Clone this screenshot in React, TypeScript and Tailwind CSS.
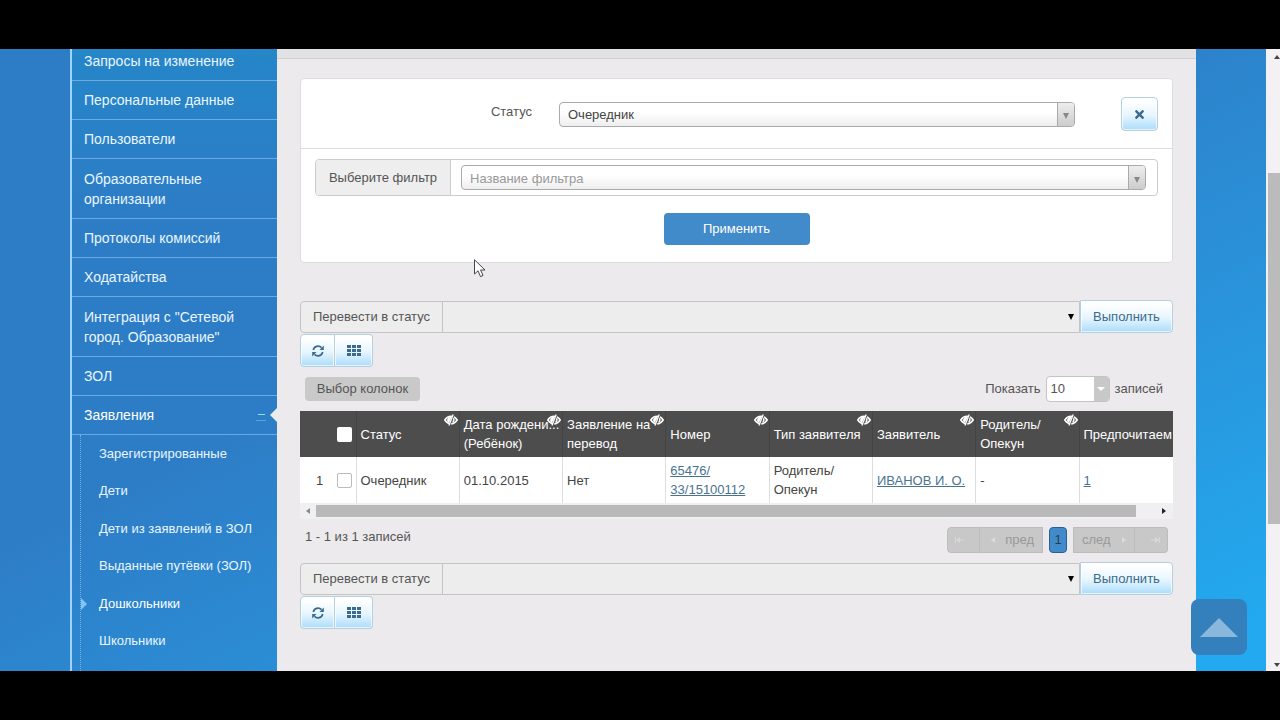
import React from 'react';
import { FaTimes } from 'react-icons/fa';

interface MenuItem {
  label: string;
  lines?: string[];
  active?: boolean;
}

interface Column {
  id: string;
  lines: string[];
  hideable: boolean;
}

const MENU: MenuItem[] = [
  { label: 'Персональные данные' },
  { label: 'Пользователи' },
  { label: 'Образовательные организации', lines: ['Образовательные', 'организации'] },
  { label: 'Протоколы комиссий' },
  { label: 'Ходатайства' },
  { label: 'Интеграция', lines: ['Интеграция с "Сетевой', 'город. Образование"'] },
  { label: 'ЗОЛ' },
];

const SUBMENU: MenuItem[] = [
  { label: 'Зарегистрированные' },
  { label: 'Дети' },
  { label: 'Дети из заявлений в ЗОЛ' },
  { label: 'Выданные путёвки (ЗОЛ)' },
  { label: 'Дошкольники', active: true },
  { label: 'Школьники' },
];

const COLUMNS: Column[] = [
  { id: 'status', lines: ['Статус'], hideable: true },
  { id: 'birth', lines: ['Дата рождени...', '(Ребёнок)'], hideable: true },
  { id: 'transfer', lines: ['Заявление на', 'перевод'], hideable: true },
  { id: 'number', lines: ['Номер'], hideable: true },
  { id: 'type', lines: ['Тип заявителя'], hideable: true },
  { id: 'applicant', lines: ['Заявитель'], hideable: true },
  { id: 'guardian', lines: ['Родитель/', 'Опекун'], hideable: true },
  { id: 'preferred', lines: ['Предпочитаем'], hideable: false },
];

const glossy =
  'border border-[#b4cfe2] bg-linear-to-b from-white from-10% via-[#e6f5fe] via-55% to-[#aadcfa] text-[#3a6b8c] shadow-[inset_0_0_0_1px_#ffffffb0]';

const EyeOff: React.FC = () => (
  <svg viewBox="0 0 14 12" className="h-[12px] w-[14px]" aria-hidden="true">
    <path
      d="M0.800 6C2.500 3.300 4.600 2.200 7 2.200S11.500 3.300 13.200 6C11.500 8.700 9.400 9.800 7 9.800S2.500 8.700 0.800 6Z"
      fill="#6a6a6a"
      stroke="#fff"
      strokeWidth="1.500"
    />
    <path d="M7.500 3.200A3 3 0 0 0 5 8.800Z" fill="#fff" />
    <path d="M9.400 4.200C10.200 5.500 10 7 8.700 8.300" fill="none" stroke="#fff" strokeWidth="1.300" />
    <path d="M10 0.600L5.800 11.600" stroke="#4d4d4d" strokeWidth="1.300" />
    <path d="M9.200 0.500L5 11.500" stroke="#fff" strokeWidth="1.300" />
  </svg>
);

const RefreshIcon: React.FC = () => (
  <svg viewBox="0 0 12 12" className="h-[12px] w-[12px]" aria-hidden="true">
    <path d="M1.300 5A4.800 4.800 0 0 1 9.500 2.700" fill="none" stroke="currentColor" strokeWidth="1.700" />
    <path d="M11.800 0.600V4.900H7.500Z" fill="currentColor" />
    <path d="M10.700 7A4.800 4.800 0 0 1 2.500 9.300" fill="none" stroke="currentColor" strokeWidth="1.700" />
    <path d="M0.200 11.400V7.100H4.500Z" fill="currentColor" />
  </svg>
);

const GridIcon: React.FC = () => (
  <svg viewBox="0 0 14 11" className="h-[11px] w-[14px]" aria-hidden="true">
    <path
      d="M0 0H4V3H0ZM5 0H9V3H5ZM10 0H14V3H10ZM0 4H4V7H0ZM5 4H9V7H5ZM10 4H14V7H10ZM0 8H4V11H0ZM5 8H9V11H5ZM10 8H14V11H10Z"
      fill="currentColor"
    />
  </svg>
);

interface FilterSelectProps {
  id: string;
  value: string;
  muted?: boolean;
}

const FilterSelect: React.FC<FilterSelectProps> = ({ id, value, muted }) => (
  <div className="flex h-[25px] min-w-0 flex-1 overflow-hidden rounded border border-[#aaa] bg-linear-to-b from-white from-40% to-[#eee]">
    <select
      id={id}
      className={`min-w-0 flex-1 appearance-none bg-transparent pt-[2px] pl-2 outline-none ${muted ? 'text-[#999]' : 'text-[#444]'}`}
    >
      <option>{value}</option>
    </select>
    <span className="flex w-[17px] items-center justify-center border-l border-[#aaa] bg-linear-to-b from-[#eee] to-[#ccc] pt-1">
      <svg viewBox="0 0 6 6" className="h-[6px] w-[6px]" aria-hidden="true">
        <path d="M0 0H6L3 6Z" fill="#888" />
      </svg>
    </span>
  </div>
);

const StatusBar: React.FC<{ id: string }> = ({ id }) => (
  <div>
    <div className="flex h-[33px] items-center">
      <div className="flex h-[32px] min-w-0 flex-1 rounded-l border border-[#c4c4c6] bg-[#ededee]">
        <label
          htmlFor={id}
          className="flex w-[142px] items-center justify-center whitespace-nowrap border-r border-[#c4c4c6] text-[#555]"
        >
          Перевести в статус
        </label>
        <select id={id} className="min-w-0 flex-1 appearance-none bg-transparent outline-none">
          <option></option>
        </select>
        <span className="flex w-[16px] items-center justify-center">
          <svg viewBox="0 0 6 6" className="h-[6px] w-[6px]" aria-hidden="true">
            <path d="M0 0H6L3 6Z" fill="#000" />
          </svg>
        </span>
      </div>
      <button type="button" className={`h-[33px] w-[93px] rounded-r ${glossy}`}>
        Выполнить
      </button>
    </div>
    <div className="mt-px flex">
      <button
        type="button"
        aria-label="Обновить"
        className={`flex h-[33px] w-[35px] items-center justify-center rounded-l ${glossy}`}
      >
        <RefreshIcon />
      </button>
      <button
        type="button"
        aria-label="Таблица"
        className={`flex h-[33px] w-[38px] items-center justify-center rounded-r border-l-0 ${glossy}`}
      >
        <GridIcon />
      </button>
    </div>
  </div>
);

const Sidebar: React.FC = () => (
  <nav className="flex w-[207px] shrink-0 flex-col border-l-2 border-[#9fd3f8] bg-linear-to-b from-[#1f8cc9]/60 to-transparent to-25% text-[14px] leading-[20px] text-[#eaf6ff]">
    <a href="#requests" className="border-b border-[#69abe0] pt-[2px] pb-[9px] pl-3">
      Запросы на изменение
    </a>
    {MENU.map((item) => (
      <a
        key={item.label}
        href="#section"
        className={`border-b border-[#69abe0] pl-3 ${item.lines ? 'pt-[10px] pb-[9px]' : 'py-[9px]'}`}
      >
        {(item.lines || [item.label]).map((line) => (
          <span key={line} className="block whitespace-nowrap">
            {line}
          </span>
        ))}
      </a>
    ))}
    <a href="#applications" className="flex items-center border-b border-[#69abe0] py-[9px] pl-3 text-white">
      <span className="flex-1">Заявления</span>
      <span className="mr-1 flex h-[12px] w-[10px] items-center justify-center border-b border-[#5a9fd8]">
        <span className="h-px w-[7px] bg-[#8fe0e8]"></span>
      </span>
      <svg viewBox="0 0 7 14" className="h-[14px] w-[7px]" aria-hidden="true">
        <path d="M7 0L0 7L7 14Z" fill="#eceaed" />
      </svg>
    </a>
    <ul className="ml-2 grid flex-1 auto-rows-fr border-l border-dotted border-[#6fb0e4] pb-[11px]">
      {SUBMENU.map((item) => (
        <li key={item.label} className="flex items-center">
          <span className="w-[18px]">
            {item.active && (
              <svg viewBox="0 0 6 12" className="h-[12px] w-[6px]" aria-hidden="true">
                <path d="M0 0L6 6L0 12Z" fill="#7fc4f5" />
              </svg>
            )}
          </span>
          <a href="#sub" className={`whitespace-nowrap text-[13px] ${item.active ? 'text-white' : ''}`}>
            {item.label}
          </a>
        </li>
      ))}
    </ul>
  </nav>
);

const FilterCard: React.FC = () => (
  <form className="rounded-sm border border-[#dddde0] bg-white">
    <div className="flex items-center border-b border-[#ddd] pt-[18px] pr-[14px] pb-[17px]">
      <label htmlFor="status" className="w-[231px] shrink-0 pb-1 text-right text-[#555]">
        Статус
      </label>
      <div className="mr-[46px] ml-[27px] flex min-w-0 flex-1">
        <FilterSelect id="status" value="Очередник" />
      </div>
      <button
        type="button"
        aria-label="Удалить фильтр"
        className={`flex h-[34px] w-[37px] items-center justify-center rounded ${glossy}`}
      >
        <FaTimes className="h-[13px] w-[13px]" />
      </button>
    </div>
    <div className="px-[14px] pt-[10px] pb-[17px]">
      <div className="flex h-[37px] items-stretch overflow-hidden rounded-sm border border-[#ccc]">
        <label
          htmlFor="filter"
          className="flex w-[135px] items-center justify-center whitespace-nowrap border-r border-[#ccc] bg-[#eee] text-[#555]"
        >
          Выберите фильтр
        </label>
        <div className="flex min-w-0 flex-1 items-center pr-[11px] pl-[10px]">
          <FilterSelect id="filter" value="Название фильтра" muted />
        </div>
      </div>
      <div className="mt-[17px] flex justify-center">
        <button type="button" className="h-[32px] w-[146px] rounded bg-[#428bca] text-white">
          Применить
        </button>
      </div>
    </div>
  </form>
);

const cell = 'border-r border-[#ddd] px-1 py-0 last:border-r-0';

const RecordsTable: React.FC = () => (
  <div className="overflow-hidden">
    <table className="w-[986px] table-fixed border-collapse text-left leading-[19px]">
      <colgroup>
        <col className="w-[56px]" />
        <col />
        <col />
        <col />
        <col />
        <col />
        <col />
        <col />
        <col className="w-[207px]" />
      </colgroup>
      <thead className="bg-[#4d4d4d] text-white">
        <tr className="h-[46px]">
          <th className="border-r border-[#444] p-0 pl-[37px] align-middle">
            <input
              type="checkbox"
              aria-label="Выбрать все"
              className="block h-[15px] w-[15px] appearance-none rounded-[2px] bg-white"
            />
          </th>
          {COLUMNS.map((col) => (
            <th key={col.id} className="relative border-r border-[#444] px-1 py-0 font-normal last:border-r-0">
              {col.lines.map((line) => (
                <span key={line} className="block whitespace-nowrap">
                  {line}
                </span>
              ))}
              {col.hideable && (
                <span className="absolute top-[3px] right-px">
                  <EyeOff />
                </span>
              )}
            </th>
          ))}
        </tr>
      </thead>
      <tbody className="bg-white text-[#444]">
        <tr className="h-[46px]">
          <td className="border-r border-[#ddd] p-0">
            <div className="flex items-center">
              <span className="w-[37px] pl-4">1</span>
              <input
                type="checkbox"
                aria-label="Выбрать запись 1"
                className="h-[15px] w-[15px] appearance-none rounded-[2px] border border-[#bbb] bg-white"
              />
            </div>
          </td>
          <td className={cell}>Очередник</td>
          <td className={cell}>01.10.2015</td>
          <td className={cell}>Нет</td>
          <td className={cell}>
            <a href="#record" className="text-[#4a7391] underline">
              65476/
              <br />
              33/15100112
            </a>
          </td>
          <td className={cell}>
            Родитель/
            <br />
            Опекун
          </td>
          <td className={cell}>
            <a href="#applicant" className="whitespace-nowrap text-[#4a7391] underline">
              ИВАНОВ И. О.
            </a>
          </td>
          <td className={cell}>-</td>
          <td className={cell}>
            <a href="#preferred" className="text-[#4a7391] underline">
              1
            </a>
          </td>
        </tr>
      </tbody>
    </table>
    <div className="flex h-[16px] items-center bg-[#f0eff1]">
      <span className="flex w-[16px] justify-center">
        <svg viewBox="0 0 4 6" className="h-[6px] w-[4px]" aria-hidden="true">
          <path d="M4 0L0 3L4 6Z" fill="#8a8a8a" />
        </svg>
      </span>
      <span className="h-[12px] flex-1 bg-[#b9b9b9]"></span>
      <span className="flex w-[37px] justify-end pr-[7px]">
        <svg viewBox="0 0 4 6" className="h-[6px] w-[4px]" aria-hidden="true">
          <path d="M0 0L4 3L0 6Z" fill="#222" />
        </svg>
      </span>
    </div>
  </div>
);

const Pager: React.FC = () => (
  <div className="flex h-[26px] items-stretch text-[#999]">
    <button
      type="button"
      aria-label="Первая"
      className="flex w-[33px] items-center justify-center rounded-l border border-[#bdbdbd] bg-[#c8c8c8] pr-2"
    >
      <svg viewBox="0 0 9 6" className="h-[6px] w-[9px]" aria-hidden="true">
        <path d="M0 0H1V6H0ZM5 0V6L1 3ZM5 2.500H9V3.500H5Z" fill="#d8d8d8" />
      </svg>
    </button>
    <button
      type="button"
      className="flex w-[63px] items-center justify-end gap-[10px] border-y border-r border-[#bdbdbd] bg-[#c8c8c8] pr-2"
    >
      <svg viewBox="0 0 4 6" className="h-[6px] w-[4px]" aria-hidden="true">
        <path d="M4 0V6L0 3Z" fill="#dcdcdc" />
      </svg>
      пред
    </button>
    <button
      type="button"
      className="mx-[6px] w-[18px] rounded border border-[#2c5f8f] bg-[#428bca] text-[#22405c]"
    >
      1
    </button>
    <button
      type="button"
      className="flex w-[62px] items-center gap-[11px] border border-[#bdbdbd] bg-[#c8c8c8] pl-2"
    >
      след
      <svg viewBox="0 0 4 6" className="h-[6px] w-[4px]" aria-hidden="true">
        <path d="M0 0V6L4 3Z" fill="#dcdcdc" />
      </svg>
    </button>
    <button
      type="button"
      aria-label="Последняя"
      className="flex w-[33px] items-center justify-center rounded-r border-y border-r border-[#bdbdbd] bg-[#c8c8c8] pl-2"
    >
      <svg viewBox="0 0 9 6" className="h-[6px] w-[9px]" aria-hidden="true">
        <path d="M8 0H9V6H8ZM4 0V6L8 3ZM0 2.500H4V3.500H0Z" fill="#d8d8d8" />
      </svg>
    </button>
  </div>
);

const App: React.FC = () => {
  return (
    <div className="relative flex min-h-screen flex-col bg-black py-[49px] font-['Liberation_Sans',Arial,sans-serif] text-[13px] leading-[20px]">
      <div className="flex flex-1 bg-linear-to-br from-[#2d7dc6] from-40% to-[#22a9ef] to-95%">
        <div className="w-[70px] shrink-0"></div>
        <Sidebar />
        <main className="min-w-0 flex-1 bg-[#eceaed]">
          <div className="h-[10px] border-b border-[#d0cfd2] bg-[#e2e1e4]"></div>
          <div className="px-[23px] pt-[19px]">
            <FilterCard />
            <div className="pt-[37px]">
              <StatusBar id="bulk-top" />
            </div>
            <div className="flex items-center justify-between px-[5px] pt-[9px] pb-[9px]">
              <button type="button" className="h-[24px] w-[115px] rounded bg-[#c9c9c9] text-[#555]">
                Выбор колонок
              </button>
              <div className="flex items-center gap-[5px] pr-[5px] text-[#555]">
                <label htmlFor="page-size">Показать</label>
                <div className="flex h-[26px] w-[64px] overflow-hidden rounded border border-[#c4c4c4] bg-white">
                  <select id="page-size" className="min-w-0 flex-1 appearance-none bg-transparent pl-1 outline-none">
                    <option>10</option>
                  </select>
                  <span className="flex w-[15px] items-center justify-center bg-[#c8c8c8]">
                    <svg viewBox="0 0 8 4" className="h-[4px] w-[8px]" aria-hidden="true">
                      <path d="M0 0H8L4 4Z" fill="#fff" />
                    </svg>
                  </span>
                </div>
                <span>записей</span>
              </div>
            </div>
            <RecordsTable />
            <div className="flex items-start justify-between px-[5px] pt-[8px] pb-[9px]">
              <p className="text-[#555]">1 - 1 из 1 записей</p>
              <Pager />
            </div>
            <StatusBar id="bulk-bottom" />
          </div>
        </main>
        <div className="w-[70px] shrink-0"></div>
        <div className="flex w-[14px] shrink-0 flex-col items-end overflow-hidden bg-[#f3f1f3]">
          <svg viewBox="0 0 6 4" className="mt-[6px] h-[4px] w-[6px]" aria-hidden="true">
            <path d="M0 4L3 0L6 4Z" fill="#444" />
          </svg>
          <div className="mt-[114px] h-[351px] w-[12px] bg-[#bcbbbc]"></div>
          <svg viewBox="0 0 6 4" className="mt-auto mb-[4px] h-[4px] w-[6px]" aria-hidden="true">
            <path d="M0 0L3 4L6 0Z" fill="#444" />
          </svg>
        </div>
      </div>

      <button
        type="button"
        aria-label="Наверх"
        className="absolute right-[33px] bottom-[65px] flex h-[56px] w-[56px] items-center justify-center rounded-lg bg-[#3480bd]"
      >
        <svg viewBox="0 0 38 19" className="h-[19px] w-[38px]" aria-hidden="true">
          <path d="M19 0L38 19H0Z" fill="#8ab8dc" />
        </svg>
      </button>

      <svg viewBox="0 0 12 19" className="pointer-events-none absolute top-[259px] left-[474px] h-[19px] w-[12px]" aria-hidden="true">
        <path d="M0.500 0.800V15L4 11.800L6.500 17.600L9 16.500L6.600 11H11Z" fill="#fff" stroke="#333" strokeWidth="0.900" />
      </svg>
    </div>
  );
};

export default App;
